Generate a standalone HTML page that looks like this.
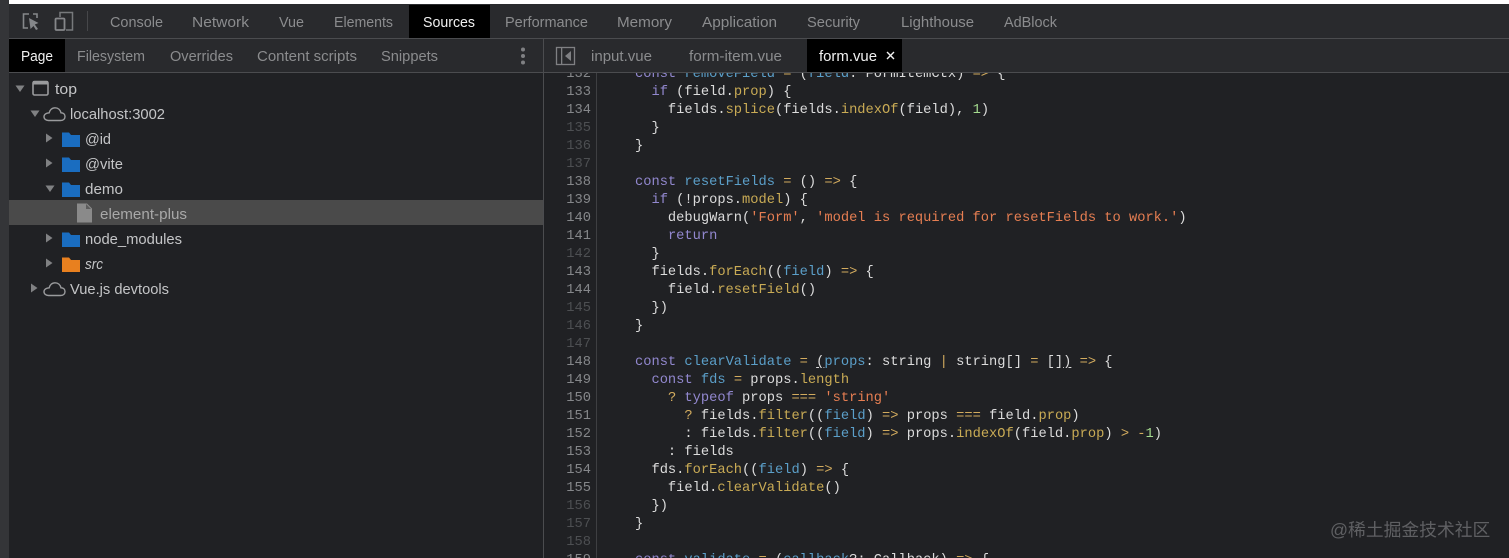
<!DOCTYPE html>
<html><head><meta charset="utf-8">
<style>
html,body{margin:0;padding:0;background:#202124;width:1509px;height:558px;overflow:hidden}
#r{position:relative;width:1509px;height:558px;overflow:hidden;background:#202124;filter:blur(.3px)}
svg{position:absolute;left:0;top:0}
svg text{font-family:"Liberation Sans","Noto Sans CJK SC",sans-serif;font-size:15px}
.g{fill:#8b8c8e}.w{fill:#f1f1f1}.t{fill:#c4c5c7}
#code{position:absolute;left:545px;top:73px;width:964px;height:485px;overflow:hidden}
#in{position:absolute;left:0;top:2px;width:964px;height:500px}
.l{position:absolute;left:90px;height:18px;white-space:pre;font:13.73px/18px "Liberation Mono",monospace;color:#dcdcdc}
.n{position:absolute;left:0;width:46px;text-align:right;height:18px;font:13.73px/18px "Liberation Mono",monospace;color:#85878a}
.d{color:#4d4f52}
.k{color:#9288cf}.f{color:#5b9fc9}.o{color:#d2ab5e}.s{color:#e67e52}.p{color:#c9ab55}.m{color:#a5dc8f}
u{text-decoration:underline;text-underline-offset:2px}
#wm{position:absolute;left:1330px;top:518px;font:17.8px/24px "Liberation Sans","Noto Sans CJK SC",sans-serif;color:#5f6063;white-space:nowrap}
</style></head><body><div id="r">
<svg width="1509" height="558" viewBox="0 0 1509 558">
<rect x="0" y="0" width="9" height="558" fill="#343538"/>
<rect x="9" y="0" width="1500" height="4" fill="#ffffff"/>
<rect x="9" y="4" width="1500" height="34" fill="#292a2d"/>
<rect x="9" y="39" width="1500" height="33" fill="#292a2d"/>
<rect x="9" y="38" width="1500" height="1" fill="#4b4c4f"/>
<rect x="9" y="72" width="1500" height="1" fill="#4b4c4f"/>
<rect x="543" y="39" width="1" height="519" fill="#4b4c4f"/>
<rect x="596" y="73" width="1" height="485" fill="#3e3f42"/>
<rect x="409" y="5" width="81" height="33" fill="#000"/>
<rect x="9" y="39" width="56" height="33" fill="#000"/>
<rect x="807" y="39" width="95" height="33" fill="#000"/>
<rect x="9" y="200" width="534" height="25" fill="#4a4a4a"/>

<!-- inspect icon -->
<path d="M29 14H23.500V28H28M33 14H37V18" fill="none" stroke="#85878a" stroke-width="1.600"/>
<path d="M29 18L38.500 23L34.800 24.500L38 29L36 30L33.500 26L30.500 29Z" fill="#85878a"/>
<!-- device icon -->
<path d="M60 17V12.500H72.500V30H66" fill="none" stroke="#77797c" stroke-width="1.500"/>
<rect x="55.500" y="18.500" width="9" height="11.500" rx="1" fill="none" stroke="#85878a" stroke-width="1.800"/>
<rect x="87" y="11" width="1" height="20" fill="#46474a"/>

<g class="g">
<text x="110" y="27" textLength="53" lengthAdjust="spacingAndGlyphs">Console</text>
<text x="192" y="27" textLength="57" lengthAdjust="spacingAndGlyphs">Network</text>
<text x="279" y="27" textLength="25" lengthAdjust="spacingAndGlyphs">Vue</text>
<text x="334" y="27" textLength="59" lengthAdjust="spacingAndGlyphs">Elements</text>
<text x="505" y="27" textLength="83" lengthAdjust="spacingAndGlyphs">Performance</text>
<text x="617" y="27" textLength="55" lengthAdjust="spacingAndGlyphs">Memory</text>
<text x="702" y="27" textLength="75" lengthAdjust="spacingAndGlyphs">Application</text>
<text x="807" y="27" textLength="53" lengthAdjust="spacingAndGlyphs">Security</text>
<text x="901" y="27" textLength="73" lengthAdjust="spacingAndGlyphs">Lighthouse</text>
<text x="1004" y="27" textLength="53" lengthAdjust="spacingAndGlyphs">AdBlock</text>
<text x="77" y="61" textLength="68" lengthAdjust="spacingAndGlyphs">Filesystem</text>
<text x="170" y="61" textLength="63" lengthAdjust="spacingAndGlyphs">Overrides</text>
<text x="257" y="61" textLength="100" lengthAdjust="spacingAndGlyphs">Content scripts</text>
<text x="381" y="61" textLength="57" lengthAdjust="spacingAndGlyphs">Snippets</text>
<text x="591" y="61" textLength="61" lengthAdjust="spacingAndGlyphs">input.vue</text>
<text x="689" y="61" textLength="93" lengthAdjust="spacingAndGlyphs">form-item.vue</text>
</g>
<text class="w" x="423" y="27" textLength="52" lengthAdjust="spacingAndGlyphs">Sources</text>
<text class="w" x="21" y="61" textLength="32" lengthAdjust="spacingAndGlyphs">Page</text>
<text class="w" x="819" y="61" textLength="58" lengthAdjust="spacingAndGlyphs">form.vue</text>
<path d="M887 52L894 59M894 52L887 59" stroke="#f1f1f1" stroke-width="1.400"/>

<!-- kebab -->
<circle cx="523" cy="49.500" r="2" fill="#7f8083"/><circle cx="523" cy="56" r="2" fill="#7f8083"/><circle cx="523" cy="62.500" r="2" fill="#7f8083"/>
<!-- panel toggle -->
<rect x="556.500" y="47.500" width="18" height="17" fill="none" stroke="#7f8083" stroke-width="1.300"/>
<rect x="561" y="48" width="1.300" height="16" fill="#7f8083"/>
<path d="M571 51V61L565 56Z" fill="#7f8083"/>

<!-- tree arrows -->
<g fill="#808183">
<path d="M15.500 85.500H24.500L20 92Z"/>
<path d="M30.500 110.500H39.500L35 117Z"/>
<path d="M46 133.500V142.500L52.500 138Z"/>
<path d="M46 158.500V167.500L52.500 163Z"/>
<path d="M45.500 185.500H54.500L50 192Z"/>
<path d="M46 233.500V242.500L52.500 238Z"/>
<path d="M46 258.500V267.500L52.500 263Z"/>
<path d="M31 283.500V292.500L37.500 288Z"/>
</g>
<!-- top frame -->
<rect x="33" y="81.500" width="15" height="13.500" rx="1.500" fill="none" stroke="#9a9b9d" stroke-width="1.600"/>
<rect x="33" y="81" width="15" height="3.500" fill="#9a9b9d"/>
<!-- clouds -->
<path d="M48.500 120.500H60.500C63.500 120.500 65 118.800 65 116.500C65 114.200 63.300 112.800 61 112.800C60.300 109.800 58 107.800 55 107.800C52 107.800 49.700 110 49.200 112.800C46.300 113 44 114.400 44 116.800C44 119 46 120.500 48.500 120.500Z" fill="none" stroke="#9a9b9d" stroke-width="1.400"/>
<path d="M48.500 295.500H60.500C63.500 295.500 65 293.800 65 291.500C65 289.200 63.300 287.800 61 287.800C60.300 284.800 58 282.800 55 282.800C52 282.800 49.700 285 49.200 287.800C46.300 288 44 289.400 44 291.800C44 294 46 295.500 48.500 295.500Z" fill="none" stroke="#9a9b9d" stroke-width="1.400"/>
<!-- folders -->
<g fill="#1a6dc0">
<path d="M62 132.500H69L71 135H80V147H62Z"/>
<path d="M62 157.500H69L71 160H80V172H62Z"/>
<path d="M62 182.500H69L71 185H80V197H62Z"/>
<path d="M62 232.500H69L71 235H80V247H62Z"/>
</g>
<path d="M62 257.500H69L71 260H80V272H62Z" fill="#e8801f"/>
<!-- file -->
<path d="M77 203.500H87L92 208.500V222.500H77Z" fill="#8a8a8a"/>
<path d="M86 204V209H91Z" fill="#5c5c5c"/>

<g class="t">
<text x="55" y="94" textLength="22" lengthAdjust="spacingAndGlyphs">top</text>
<text x="70" y="119" textLength="95" lengthAdjust="spacingAndGlyphs">localhost:3002</text>
<text x="85" y="144" textLength="26" lengthAdjust="spacingAndGlyphs">@id</text>
<text x="85" y="169" textLength="38" lengthAdjust="spacingAndGlyphs">@vite</text>
<text x="85" y="194" textLength="38" lengthAdjust="spacingAndGlyphs">demo</text>
<text x="85" y="244" textLength="97" lengthAdjust="spacingAndGlyphs">node_modules</text>
<text x="85" y="269" textLength="18" lengthAdjust="spacingAndGlyphs" font-style="italic">src</text>
<text x="70" y="294" textLength="99" lengthAdjust="spacingAndGlyphs">Vue.js devtools</text>
</g>
<text x="100" y="219" textLength="87" lengthAdjust="spacingAndGlyphs" fill="#a8a8a8">element-plus</text>
</svg>

<div id="code"><div id="in">
<div class="n" style="top:-9px">132</div><div class="l" style="top:-9px"><span class="k">const</span> <span class="f">removeField</span> <span class="o">=</span> (<span class="f">field</span>: FormItemCtx) <span class="o">=&gt;</span> {</div>
<div class="n" style="top:9px">133</div><div class="l" style="top:9px">  <span class="k">if</span> (field.<span class="p">prop</span>) {</div>
<div class="n" style="top:27px">134</div><div class="l" style="top:27px">    fields.<span class="p">splice</span>(fields.<span class="p">indexOf</span>(field), <span class="m">1</span>)</div>
<div class="n d" style="top:45px">135</div><div class="l" style="top:45px">  }</div>
<div class="n d" style="top:63px">136</div><div class="l" style="top:63px">}</div>
<div class="n d" style="top:81px">137</div>
<div class="n" style="top:99px">138</div><div class="l" style="top:99px"><span class="k">const</span> <span class="f">resetFields</span> <span class="o">=</span> () <span class="o">=&gt;</span> {</div>
<div class="n" style="top:117px">139</div><div class="l" style="top:117px">  <span class="k">if</span> (!props.<span class="p">model</span>) {</div>
<div class="n" style="top:135px">140</div><div class="l" style="top:135px">    debugWarn(<span class="s">'Form'</span>, <span class="s">'model is required for resetFields to work.'</span>)</div>
<div class="n" style="top:153px">141</div><div class="l" style="top:153px">    <span class="k">return</span></div>
<div class="n d" style="top:171px">142</div><div class="l" style="top:171px">  }</div>
<div class="n" style="top:189px">143</div><div class="l" style="top:189px">  fields.<span class="p">forEach</span>((<span class="f">field</span>) <span class="o">=&gt;</span> {</div>
<div class="n" style="top:207px">144</div><div class="l" style="top:207px">    field.<span class="p">resetField</span>()</div>
<div class="n d" style="top:225px">145</div><div class="l" style="top:225px">  })</div>
<div class="n d" style="top:243px">146</div><div class="l" style="top:243px">}</div>
<div class="n d" style="top:261px">147</div>
<div class="n" style="top:279px">148</div><div class="l" style="top:279px"><span class="k">const</span> <span class="f">clearValidate</span> <span class="o">=</span> <u>(</u><span class="f">props</span>: string <span class="o">|</span> string[] <span class="o">=</span> []<u>)</u> <span class="o">=&gt;</span> {</div>
<div class="n" style="top:297px">149</div><div class="l" style="top:297px">  <span class="k">const</span> <span class="f">fds</span> <span class="o">=</span> props.<span class="p">length</span></div>
<div class="n" style="top:315px">150</div><div class="l" style="top:315px">    <span class="o">?</span> <span class="k">typeof</span> props <span class="o">===</span> <span class="s">'string'</span></div>
<div class="n" style="top:333px">151</div><div class="l" style="top:333px">      <span class="o">?</span> fields.<span class="p">filter</span>((<span class="f">field</span>) <span class="o">=&gt;</span> props <span class="o">===</span> field.<span class="p">prop</span>)</div>
<div class="n" style="top:351px">152</div><div class="l" style="top:351px">      : fields.<span class="p">filter</span>((<span class="f">field</span>) <span class="o">=&gt;</span> props.<span class="p">indexOf</span>(field.<span class="p">prop</span>) <span class="o">&gt;</span> <span class="o">-</span><span class="m">1</span>)</div>
<div class="n" style="top:369px">153</div><div class="l" style="top:369px">    : fields</div>
<div class="n" style="top:387px">154</div><div class="l" style="top:387px">  fds.<span class="p">forEach</span>((<span class="f">field</span>) <span class="o">=&gt;</span> {</div>
<div class="n" style="top:405px">155</div><div class="l" style="top:405px">    field.<span class="p">clearValidate</span>()</div>
<div class="n d" style="top:423px">156</div><div class="l" style="top:423px">  })</div>
<div class="n d" style="top:441px">157</div><div class="l" style="top:441px">}</div>
<div class="n d" style="top:459px">158</div>
<div class="n" style="top:477px">159</div><div class="l" style="top:477px"><span class="k">const</span> <span class="f">validate</span> <span class="o">=</span> (<span class="f">callback</span>?: Callback) <span class="o">=&gt;</span> {</div>
</div></div>
<div id="wm">@稀土掘金技术社区</div>
</div></body></html>
